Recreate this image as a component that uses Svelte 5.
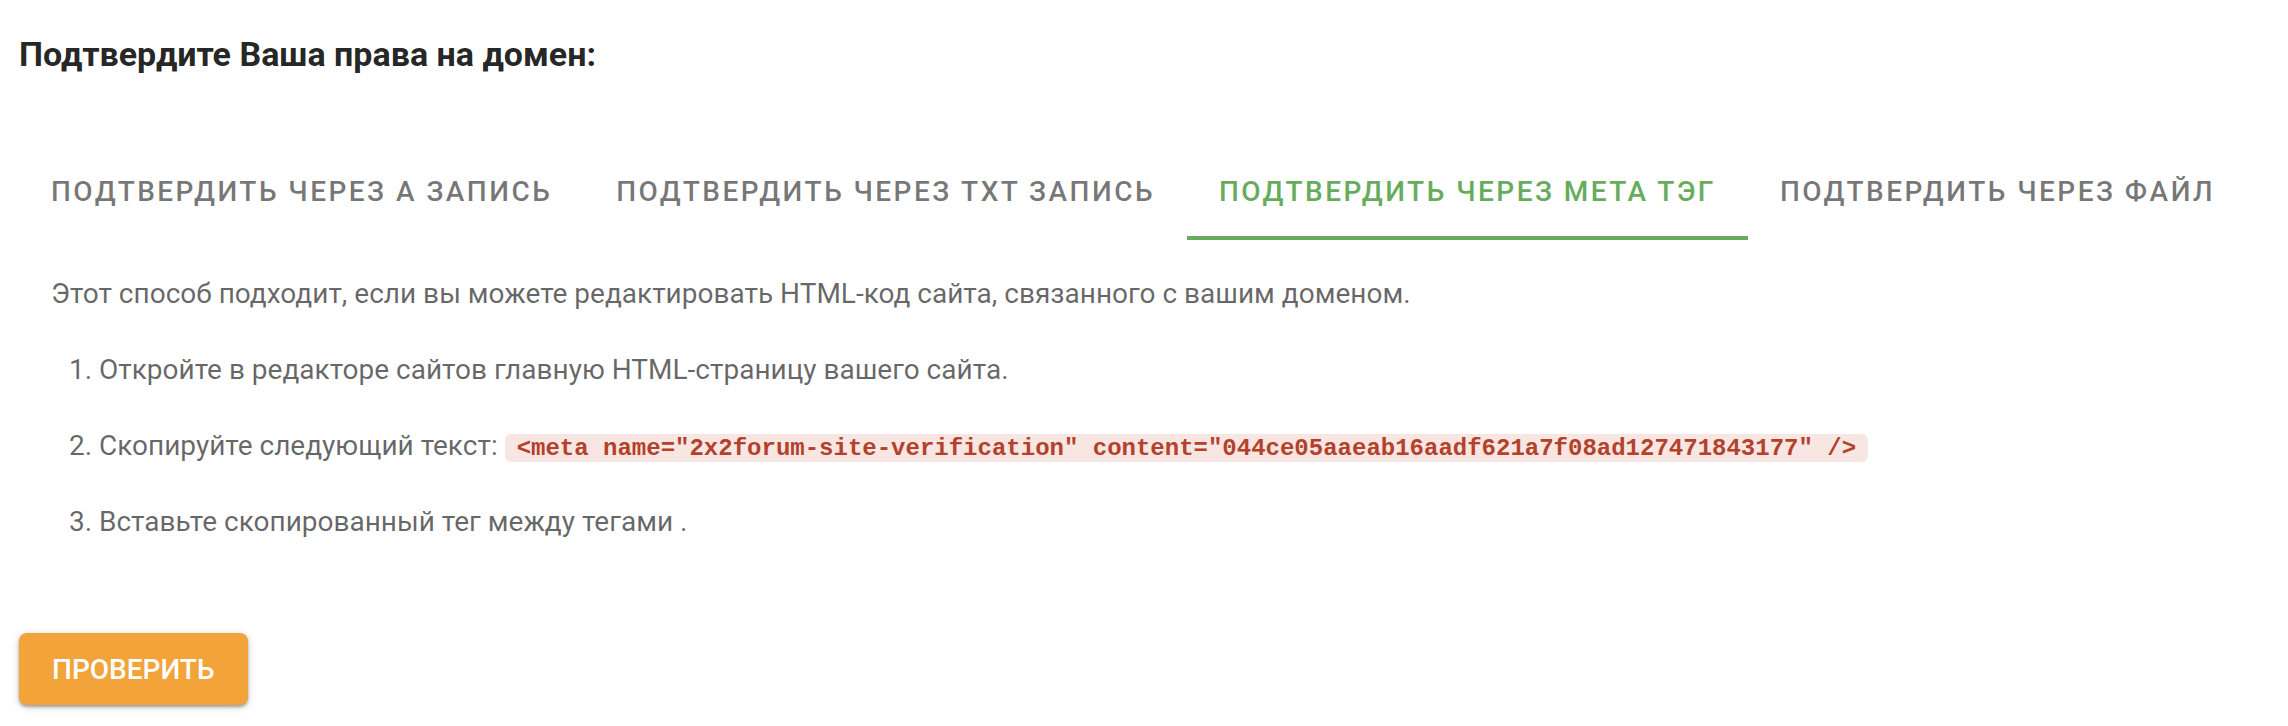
<script>
  const tabs = [
    { id: 'a', label: 'Подтвердить через A запись' },
    { id: 'txt', label: 'Подтвердить через TXT запись' },
    { id: 'meta', label: 'Подтвердить через МЕТА тэг' },
    { id: 'file', label: 'Подтвердить через файл' }
  ];
  let active = $state('meta');
  const tag = '<meta name="2x2forum-site-verification" content="044ce05aaeab16aadf621a7f08ad127471843177" />';
</script>

<main>
  <h1>Подтвердите Ваша права на домен:</h1>
  <div class="tabs" role="tablist">
    {#each tabs as tab}
      <button
        class="tab"
        class:active={active === tab.id}
        id="tab-{tab.id}"
        role="tab"
        aria-selected={active === tab.id}
        onclick={() => (active = tab.id)}>{tab.label}</button>
    {/each}
  </div>
  <section role="tabpanel" aria-labelledby="tab-{active}">
    <p>Этот способ подходит, если вы можете редактировать HTML-код сайта, связанного с вашим доменом.</p>
    <ol>
      <li>Откройте в редакторе сайтов главную HTML-страницу вашего сайта.</li>
      <li>Скопируйте следующий текст: <code>{tag}</code></li>
      <li>Вставьте скопированный тег между тегами .</li>
    </ol>
  </section>
  <button class="check">Проверить</button>
</main>

<style>
  :global(body) {
    background: #fff;
  }
  main {
    padding: 32px 19px 19px;
    font-family: Roboto, "Noto Sans", sans-serif;
    color: rgba(0, 0, 0, 0.6);
  }
  h1 {
    margin: 0 0 80px;
    font-size: 34px;
    line-height: 44px;
    font-weight: 700;
    color: rgba(0, 0, 0, 0.87);
  }
  .tabs {
    display: flex;
  }
  .tab {
    flex: none;
    padding: 16px 32px 24px;
    border: 0;
    border-bottom: 4px solid transparent;
    background: none;
    font: 500 28px/40px Roboto, "Noto Sans", sans-serif;
    letter-spacing: 0.088em;
    text-transform: uppercase;
    color: rgba(0, 0, 0, 0.54);
    cursor: pointer;
  }
  .tab.active {
    color: #67ac5c;
    border-color: #67ac5c;
  }
  section {
    margin-bottom: 25px;
    padding: 32px;
    font-size: 28px;
    line-height: 44px;
  }
  p {
    margin: 0 0 32px;
  }
  ol {
    margin: 0;
    padding-left: 48px;
  }
  li {
    margin-bottom: 32px;
  }
  code {
    padding: 1px 12px 0;
    border-radius: 6px;
    background: #f8e6e2;
    color: #b3412b;
    font: 700 24px "Liberation Mono", monospace;
  }
  .check {
    display: block;
    height: 72px;
    padding: 0 33px;
    border: 0;
    border-radius: 8px;
    background: #f2a33a;
    color: #fff;
    font: 500 28px Roboto, "Noto Sans", sans-serif;
    text-transform: uppercase;
    box-shadow: 0 2px 3px rgba(0, 0, 0, 0.3), 0 2px 8px rgba(0, 0, 0, 0.16);
    cursor: pointer;
  }
</style>
